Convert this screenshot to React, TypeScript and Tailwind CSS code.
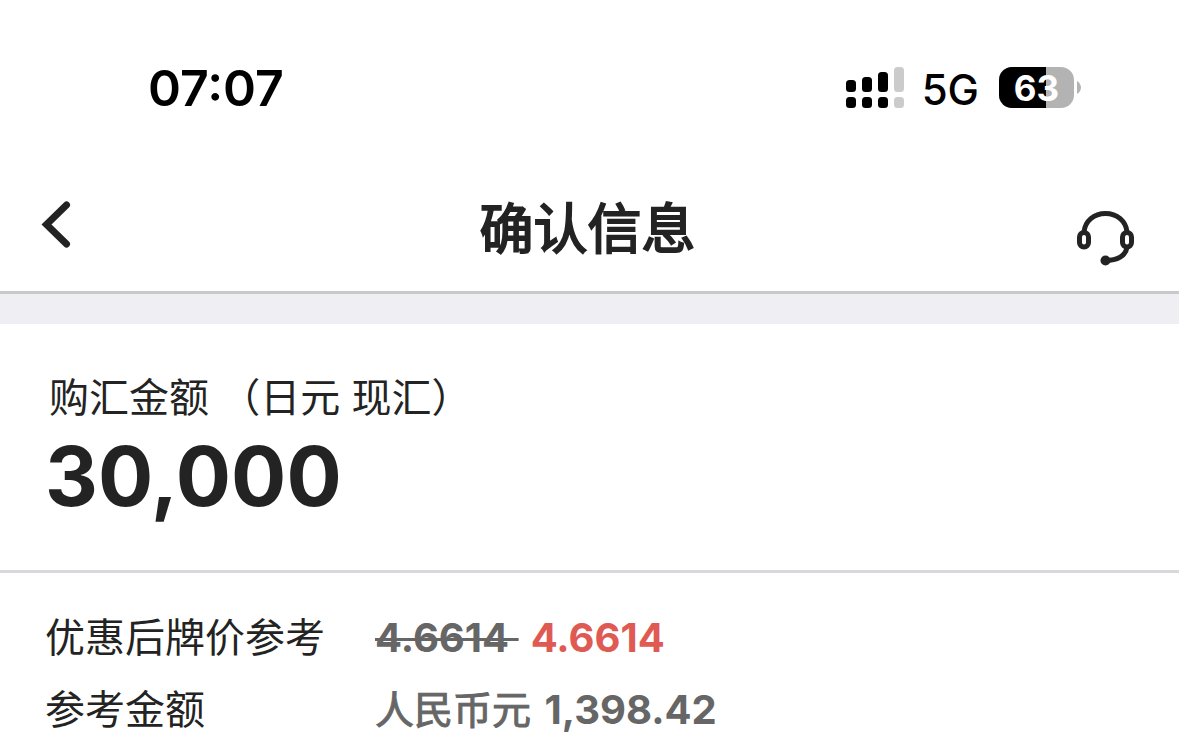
import type { ReactNode } from "react";

const SIGNAL_BARS = [
  { x: 0, top: 13, color: "#000000" },
  { x: 16, top: 10, color: "#000000" },
  { x: 32, top: 5, color: "#000000" },
  { x: 48, top: 0, color: "#cbcbcb" },
];

function Signal() {
  return (
    <svg width="58" height="41" viewBox="0 0 58 41" aria-label="信号">
      {SIGNAL_BARS.map((bar) => (
        <g key={bar.x} fill={bar.color}>
          <rect x={bar.x} y={bar.top} width="10" height={25 - bar.top} rx="3.5" />
          <rect x={bar.x} y="30" width="10" height="11" rx="3.5" />
        </g>
      ))}
    </svg>
  );
}

function Battery({ level }: { level: number }) {
  return (
    <div className="flex items-center gap-[3px]">
      <div className="relative flex h-[41px] w-[75px] items-center justify-center overflow-hidden rounded-[13px] bg-[#b3b3b3]">
        <div className="absolute inset-y-0 left-0 bg-black" style={{ width: `${level}%` }} />
        <span className="relative text-[35px] leading-[40px] font-bold text-white">{level}</span>
      </div>
      <svg width="4" height="13" viewBox="0 0 4 13" aria-hidden="true">
        <path d="M0 0C2.5 1.5 4 4 4 6.5S2.5 11.5 0 13Z" fill="#b3b3b3" />
      </svg>
    </div>
  );
}

function HeadsetIcon() {
  return (
    <svg width="58" height="56" viewBox="0 0 58 56" fill="none" stroke="#232323" strokeWidth="5" aria-hidden="true">
      <path d="M8 22C9 11 18 3.500 29.500 3.500S50 11 51 22" />
      <rect x="3.500" y="22.500" width="9" height="14.500" rx="4.500" />
      <rect x="46.500" y="22.500" width="9" height="14.500" rx="4.500" />
      <path d="M51 37C50 46 41 50.500 29.500 50.500" />
      <circle cx="29.500" cy="50.500" r="5" fill="#232323" stroke="none" />
    </svg>
  );
}

function Row({ label, children }: { label: string; children: ReactNode }) {
  return (
    <div className="flex text-[40px] leading-[72px]">
      <dt className="w-[330px] shrink-0">{label}</dt>
      <dd className="font-bold text-[#666666]">{children}</dd>
    </div>
  );
}

export default function App() {
  return (
    <div className="min-h-screen bg-white font-['Inter','Noto_Sans_CJK_SC',sans-serif] text-[#232323]">
      <div className="flex h-[160px] items-center justify-between pt-[15px] pr-[98px] pl-[148px] text-black">
        <time className="text-[50px] leading-[56px] font-semibold">07:07</time>
        <div className="flex items-center">
          <Signal />
          <span className="mr-5 ml-[18px] pt-1 text-[42px] leading-[48px] font-medium">5G</span>
          <Battery level={63} />
        </div>
      </div>

      <header className="grid h-[134px] grid-cols-[1fr_auto_1fr] items-center border-b-[3px] border-[#c9c9cc] pr-[45px] pl-[41px]">
        <button type="button" aria-label="返回" className="justify-self-start">
          <svg width="30" height="50" viewBox="0 0 30 50" fill="none" stroke="#232323" strokeWidth="7" strokeLinecap="round" aria-hidden="true">
            <path d="M25.500 4L5.500 23.500L25.500 43" />
          </svg>
        </button>
        <h1 className="pt-2 text-[54px] leading-[64px] font-normal [-webkit-text-stroke:2px]">确认信息</h1>
        <button type="button" aria-label="客服" className="mt-6 justify-self-end">
          <HeadsetIcon />
        </button>
      </header>

      <div className="h-[30px] bg-[#eeeef3]" />

      <main>
        <section className="border-b-[3px] border-[#d8d8dd] px-[45px] pt-[44px] pb-[46px]">
          <h2 className="pl-1 text-[40px] leading-[60px] font-normal">购汇金额 （日元 现汇）</h2>
          <p className="pt-px text-[82px] leading-[95px] font-bold">30,000</p>
        </section>

        <dl className="px-[45px] pt-[29px]">
          <Row label="优惠后牌价参考">
            <s className="decoration-[3px]">4.6614&nbsp;</s>
            <span className="ml-3 text-[#e05a54]">4.6614</span>
          </Row>
          <Row label="参考金额">
            <span className="mr-1 text-[39px] font-normal [-webkit-text-stroke:1px]">人民币元</span> 1,398.42
          </Row>
        </dl>
      </main>
    </div>
  );
}
